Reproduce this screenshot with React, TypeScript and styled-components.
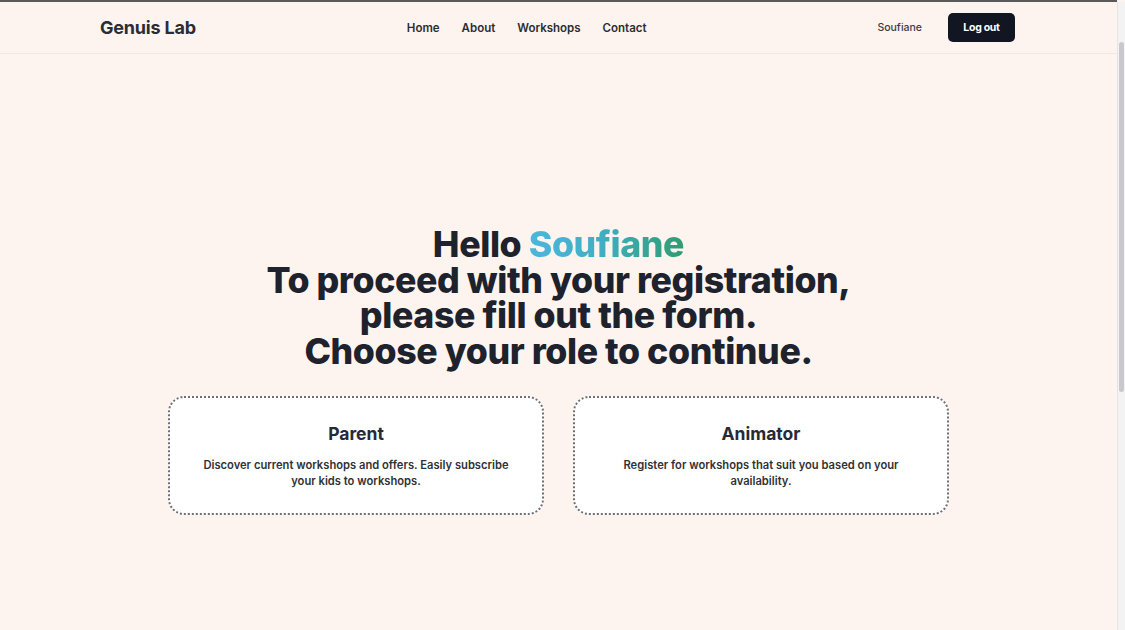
import React from "react";
import styled, { createGlobalStyle } from "styled-components";

const GlobalStyle = createGlobalStyle`
  html, body {
    margin: 0;
    padding: 0;
    background: #fdf4ef;
    font-family: Inter, "Noto Sans", sans-serif;
    color: #1e222d;
    overflow: hidden;
  }
  * { box-sizing: border-box; }
`;

const Page = styled.div`
  width: 1117px;
  height: 630px;
  border-top: 2px solid #5a5a5a;
  background: #fdf4ef;
`;

const Header = styled.header`
  height: 52px;
  border-bottom: 1px solid #f1e8e3;
  display: flex;
  align-items: center;
  justify-content: space-between;
  padding: 0 102px 0 100px;
`;

const Brand = styled.div`
  font-size: 18px;
  font-weight: 700;
  letter-spacing: -0.2px;
  color: #2a2d36;
  width: 150px;
`;

const NavLinks = styled.nav`
  display: flex;
  gap: 22px;
  margin-left: -74px;
`;

const NavLink = styled.a`
  font-size: 11.5px;
  font-weight: 600;
  color: #2b2d33;
  text-decoration: none;
`;

const UserBox = styled.div`
  display: flex;
  align-items: center;
  gap: 26px;
`;

const UserName = styled.span`
  font-size: 10.5px;
  font-weight: 500;
  color: #3a3c42;
`;

const LogoutButton = styled.button`
  background: #121522;
  color: #fff;
  border: none;
  border-radius: 5px;
  height: 29px;
  width: 67px;
  font-family: inherit;
  font-size: 10.5px;
  font-weight: 700;
  letter-spacing: -0.3px;
`;

const Main = styled.main`
  display: flex;
  flex-direction: column;
  align-items: center;
  padding-top: 173px;
`;

const Heading = styled.h1`
  margin: 0;
  text-align: center;
  font-size: 35.7px;
  line-height: 35.5px;
  font-weight: 800;
  letter-spacing: -0.4px;
  color: #1e222d;
`;

const GradientName = styled.span`
  background: linear-gradient(90deg, #4cb6dc 0%, #3fb0c4 45%, #2f9c72 100%);
  -webkit-background-clip: text;
  background-clip: text;
  color: transparent;
`;

const Cards = styled.div`
  display: flex;
  gap: 29px;
  margin-top: 27px;
`;

const Card = styled.div`
  width: 376px;
  height: 119px;
  background: #fff;
  border: 2px dotted #6f6f74;
  border-radius: 16px;
  display: flex;
  flex-direction: column;
  align-items: center;
  padding: 25px 28px 0;
  text-align: center;
`;

const CardTitle = styled.h2`
  margin: 0;
  font-size: 17.5px;
  font-weight: 700;
  color: #262a35;
`;

const CardText = styled.p`
  margin: 13px 0 0;
  font-size: 11.2px;
  line-height: 16px;
  font-weight: 600;
  color: #2f3136;
`;

const ScrollTrack = styled.div`
  position: fixed;
  top: 2px;
  right: 0;
  width: 8px;
  height: 628px;
  background: #f3f3f4;
  border-left: 1px solid #e4e4e6;
`;

const ScrollThumb = styled.div`
  margin: 40px 0 0 1px;
  width: 5px;
  height: 350px;
  border-radius: 3px;
  background: #c9c9cd;
`;

const navItems = ["Home", "About", "Workshops", "Contact"];

const roles = [
  {
    title: "Parent",
    text: "Discover current workshops and offers. Easily subscribe your kids to workshops.",
  },
  {
    title: "Animator",
    text: "Register for workshops that suit you based on your availability.",
  },
];

export default function App() {
  return (
    <>
      <GlobalStyle />
      <Page>
        <Header>
          <Brand>Genuis Lab</Brand>
          <NavLinks>
            {navItems.map((item) => (
              <NavLink key={item} href="#">
                {item}
              </NavLink>
            ))}
          </NavLinks>
          <UserBox>
            <UserName>Soufiane</UserName>
            <LogoutButton>Log out</LogoutButton>
          </UserBox>
        </Header>
        <Main>
          <Heading>
            Hello <GradientName>Soufiane</GradientName>
            <br />
            To proceed with your registration,
            <br />
            please fill out the form.
            <br />
            Choose your role to continue.
          </Heading>
          <Cards>
            {roles.map((role) => (
              <Card key={role.title}>
                <CardTitle>{role.title}</CardTitle>
                <CardText>{role.text}</CardText>
              </Card>
            ))}
          </Cards>
        </Main>
      </Page>
      <ScrollTrack>
        <ScrollThumb />
      </ScrollTrack>
    </>
  );
}
